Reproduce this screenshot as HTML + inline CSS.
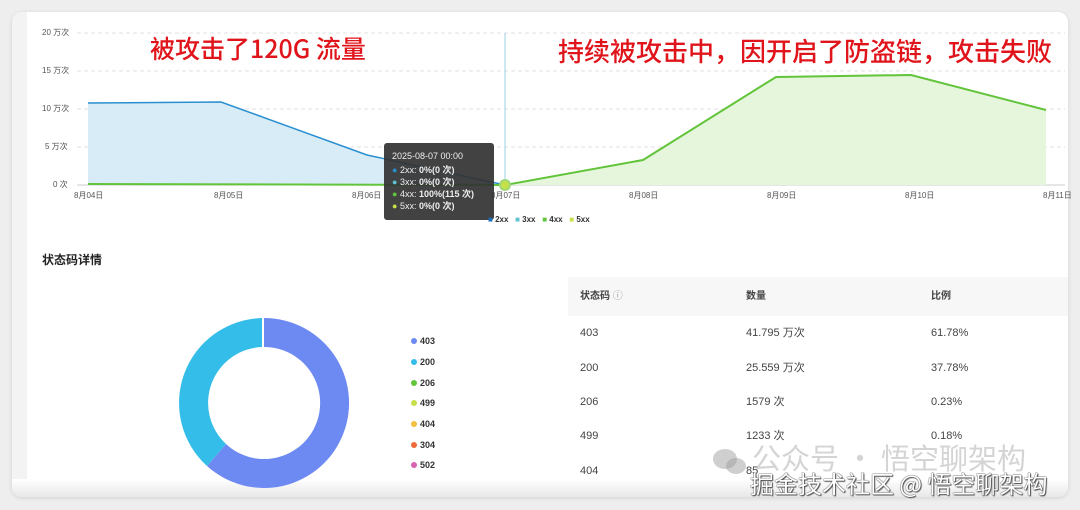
<!DOCTYPE html>
<html><head><meta charset="utf-8"><style>
body{margin:0;width:1080px;height:510px;background:#eeeeee;position:relative;overflow:hidden;font-family:"Liberation Sans","Noto Sans CJK SC",sans-serif;}
.card{position:absolute;left:12px;top:12px;width:1056px;height:485px;background:#fff;border-radius:10px;box-shadow:0 1px 4px rgba(0,0,0,.12);overflow:hidden}
.strip{position:absolute;left:0;top:0;width:15px;height:100%;background:#f3f3f3}
.t{position:absolute;white-space:nowrap;line-height:14px}
.ax{font-size:8px;color:#555;line-height:10px}
.red{color:#e0141b;font-size:26px;line-height:30px;font-weight:500;font-family:"Noto Sans CJK SC",sans-serif}
.tb{font-size:11px;color:#444}
.lg{font-size:9px;color:#333;font-weight:bold}
.dot{position:absolute;width:6px;height:6px;border-radius:50%}
</style></head><body>
<div class="card"><div class="strip"></div>
<div style="position:absolute;left:0;bottom:0;width:100%;height:18px;background:linear-gradient(#fff,#e8e8e8)"></div>
</div>
<svg style="position:absolute;left:0;top:0" width="1080" height="510">
<g stroke="#e2e2e2" stroke-dasharray="4,3">
<line x1="77" y1="33" x2="1065" y2="33"/><line x1="77" y1="71" x2="1065" y2="71"/><line x1="77" y1="109" x2="1065" y2="109"/><line x1="77" y1="147" x2="1065" y2="147"/></g>
<line x1="77" y1="185" x2="1065" y2="185" stroke="#ccc"/>
<path d="M88,103 L221,102 L367,155 L505,185 L88,185Z" fill="#d8ecf8"/>
<path d="M88,103 L221,102 L367,155 L505,185" fill="none" stroke="#2a8fd0" stroke-width="1.5"/>
<path d="M505,185 L643,160 L776,77 L911,75 L1046,110 L1046,185Z" fill="#e6f6dc"/>
<path d="M88,184 L505,185 L643,160 L776,77 L911,75 L1046,110" fill="none" stroke="#62c43a" stroke-width="2"/>
<line x1="505" y1="33" x2="505" y2="185" stroke="#9fd3e6"/>
<circle cx="505" cy="185" r="5" fill="#c6e04a" stroke="#9fd67a" stroke-width="2"/>
<path d="M264,318 A85,85 0 1 1 207,466 L226,444 A56,56 0 1 0 264,347Z" fill="#6d8af2"/>
<path d="M207,466 A85,85 0 0 1 262,318 L262,347 A56,56 0 0 0 226,444Z" fill="#35bde9"/>
<rect x="568" y="277" width="500" height="39" fill="#f7f7f7"/>
</svg>
<div class="t ax" style="left:42px;top:28px">20 万次</div>
<div class="t ax" style="left:42px;top:66px">15 万次</div>
<div class="t ax" style="left:42px;top:104px">10 万次</div>
<div class="t ax" style="left:45px;top:142px">5 万次</div>
<div class="t ax" style="left:53px;top:180px">0 次</div>
<div class="t ax" style="left:74px;top:191px">8月04日</div>
<div class="t ax" style="left:214px;top:191px">8月05日</div>
<div class="t ax" style="left:352px;top:191px">8月06日</div>
<div class="t ax" style="left:491px;top:191px">8月07日</div>
<div class="t ax" style="left:629px;top:191px">8月08日</div>
<div class="t ax" style="left:767px;top:191px">8月09日</div>
<div class="t ax" style="left:905px;top:191px">8月10日</div>
<div class="t ax" style="left:1043px;top:191px">8月11日</div>
<div class="t red" style="left:150px;top:33px;font-size:25px">被攻击了120G 流量</div>
<div class="t red" style="left:558px;top:36px">持续被攻击中，因开启了防盗链，攻击失败</div>
<div style="position:absolute;left:384px;top:143px;width:110px;height:77px;background:rgba(50,50,50,.92);border-radius:3px;color:#eee;font-size:9px;line-height:12px">
<div style="position:absolute;left:8px;top:7px">2025-08-07 00:00</div>
<div style="position:absolute;left:8px;top:21px;line-height:12px">
<div><span style="color:#2a8fd0">●</span> 2xx: <b>0%(0 次)</b></div>
<div><span style="color:#5fc2d1">●</span> 3xx: <b>0%(0 次)</b></div>
<div><span style="color:#62c43a">●</span> 4xx: <b>100%(115 次)</b></div>
<div><span style="color:#c6e04a">●</span> 5xx: <b>0%(0 次)</b></div></div></div>
<div class="t" style="left:488px;top:213px;font-size:8px;font-weight:bold;color:#333"><span style="color:#1e6fb8">■</span> 2xx &nbsp; <span style="color:#5fc2d1">■</span> 3xx &nbsp; <span style="color:#62c43a">■</span> 4xx &nbsp; <span style="color:#c6e04a">■</span> 5xx</div>
<div class="t" style="left:42px;top:253px;font-size:12px;font-weight:bold;color:#222">状态码详情</div>
<div class="dot" style="left:411px;top:338px;background:#6d8af2"></div><div class="t lg" style="left:420px;top:334px">403</div>
<div class="dot" style="left:411px;top:359px;background:#35bde9"></div><div class="t lg" style="left:420px;top:355px">200</div>
<div class="dot" style="left:411px;top:380px;background:#62c43a"></div><div class="t lg" style="left:420px;top:376px">206</div>
<div class="dot" style="left:411px;top:400px;background:#c6e04a"></div><div class="t lg" style="left:420px;top:396px">499</div>
<div class="dot" style="left:411px;top:421px;background:#f0c040"></div><div class="t lg" style="left:420px;top:417px">404</div>
<div class="dot" style="left:411px;top:442px;background:#ee6a3a"></div><div class="t lg" style="left:420px;top:438px">304</div>
<div class="dot" style="left:411px;top:462px;background:#d565b0"></div><div class="t lg" style="left:420px;top:458px">502</div>
<div class="t tb" style="left:580px;top:290px;font-size:10px;font-weight:bold;color:#444">状态码 <span style="font-weight:normal;color:#999">ⓘ</span></div>
<div class="t tb" style="left:746px;top:290px;font-size:10px;font-weight:bold">数量</div>
<div class="t tb" style="left:931px;top:290px;font-size:10px;font-weight:bold">比例</div>
<div class="t tb" style="left:580px;top:326px">403</div><div class="t tb" style="left:746px;top:326px">41.795 万次</div><div class="t tb" style="left:931px;top:326px">61.78%</div>
<div class="t tb" style="left:580px;top:361px">200</div><div class="t tb" style="left:746px;top:361px">25.559 万次</div><div class="t tb" style="left:931px;top:361px">37.78%</div>
<div class="t tb" style="left:580px;top:395px">206</div><div class="t tb" style="left:746px;top:395px">1579 次</div><div class="t tb" style="left:931px;top:395px">0.23%</div>
<div class="t tb" style="left:580px;top:429px">499</div><div class="t tb" style="left:746px;top:429px">1233 次</div><div class="t tb" style="left:931px;top:429px">0.18%</div>
<div class="t tb" style="left:580px;top:464px">404</div><div class="t tb" style="left:746px;top:464px">85</div>
<svg style="position:absolute;left:712px;top:448px" width="34" height="28"><ellipse cx="13" cy="11" rx="12" ry="10" fill="rgba(160,160,160,.5)"/><ellipse cx="24" cy="18" rx="10" ry="8" fill="rgba(160,160,160,.5)"/></svg>
<div class="t" style="left:752px;top:440px;font-size:29px;line-height:34px;color:rgba(160,160,160,.45);font-family:'Noto Sans CJK SC',sans-serif">公众号 · 悟空聊架构</div>
<div class="t" style="left:750px;top:469px;font-size:24px;line-height:28px;color:#fff;font-family:'Noto Sans CJK SC',sans-serif;text-shadow:0 0 1px #333,0 0 1px #333,1px 1px 1px #555">掘金技术社区 @ 悟空聊架构</div>
</body></html>
